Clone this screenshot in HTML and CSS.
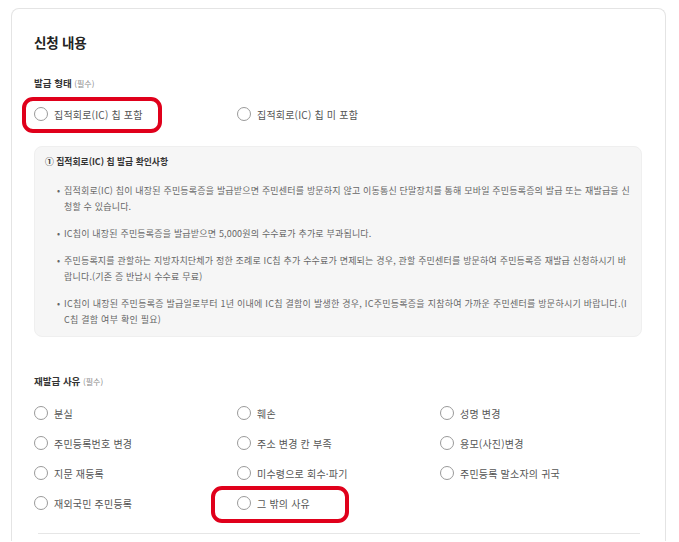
FILE: index.html
```html
<!DOCTYPE html>
<html lang="ko">
<head>
<meta charset="utf-8">
<title>신청 내용</title>
<link rel="stylesheet" href="styles.css">
</head>
<body>
<div class="card">
  <h2 class="title">신청 내용</h2>

  <div class="field-label">발급 형태 <span class="req">(필수)</span></div>
  <div class="options options-top">
    <label class="radio"><span class="circle"></span><span>집적회로(IC) 칩 포함</span><span class="mark mark-1"></span></label>
    <label class="radio"><span class="circle"></span><span>집적회로(IC) 칩 미 포함</span></label>
  </div>

  <div class="notice">
    <div class="notice-title">① 집적회로(IC) 칩 발급 확인사항</div>
    <ul class="notice-list">
      <li>집적회로(IC) 칩이 내장된 주민등록증을 발급받으면 주민센터를 방문하지 않고 이동통신 단말장치를 통해 모바일 주민등록증의 발급 또는 재발급을 신청할 수 있습니다.</li>
      <li>IC칩이 내장된 주민등록증을 발급받으면 5,000원의 수수료가 추가로 부과됩니다.</li>
      <li>주민등록지를 관할하는 지방자치단체가 정한 조례로 IC칩 추가 수수료가 면제되는 경우, 관할 주민센터를 방문하여 주민등록증 재발급 신청하시기 바랍니다.(기존 증 반납시 수수료 무료)</li>
      <li class="wide">IC칩이 내장된 주민등록증 발급일로부터 1년 이내에 IC칩 결함이 발생한 경우, IC주민등록증을 지참하여 가까운 주민센터를 방문하시기 바랍니다.(IC칩 결함 여부 확인 필요)</li>
    </ul>
  </div>

  <div class="field-label field-label-2">재발급 사유 <span class="req">(필수)</span></div>
  <div class="options options-grid">
    <label class="radio"><span class="circle"></span><span>분실</span></label>
    <label class="radio"><span class="circle"></span><span>훼손</span></label>
    <label class="radio"><span class="circle"></span><span>성명 변경</span></label>
    <label class="radio"><span class="circle"></span><span>주민등록번호 변경</span></label>
    <label class="radio"><span class="circle"></span><span>주소 변경 칸 부족</span></label>
    <label class="radio"><span class="circle"></span><span>용모(사진)변경</span></label>
    <label class="radio"><span class="circle"></span><span>지문 재등록</span></label>
    <label class="radio"><span class="circle"></span><span>미수령으로 회수·파기</span></label>
    <label class="radio"><span class="circle"></span><span>주민등록 말소자의 귀국</span></label>
    <label class="radio"><span class="circle"></span><span>재외국민 주민등록</span></label>
    <label class="radio"><span class="circle"></span><span>그 밖의 사유</span><span class="mark mark-2"></span></label>
  </div>

  <div class="divider"></div>
</div>
</body>
</html>
```

FILE: styles.css
```css
* { box-sizing: border-box; }

html, body {
  margin: 0;
  padding: 0;
  background: #ffffff;
}

body {
  font-family: "Noto Sans CJK KR", "Noto Sans", sans-serif;
  color: #333;
  padding: 8px 13px 0 11px;
  height: 542px;
  overflow: hidden;
}

.card {
  width: 655px;
  border: 1px solid #e4e4e4;
  border-bottom: none;
  border-radius: 8px 8px 0 0;
  padding: 24px 23px 7px 22px;
}

.title {
  margin: 0;
  font-size: 13.5px;
  line-height: 18px;
  font-weight: 700;
  color: #222;
  letter-spacing: -0.2px;
}

.field-label {
  margin-top: 25px;
  font-size: 9.5px;
  line-height: 14px;
  font-weight: 700;
  color: #333;
}

.field-label-2 {
  margin-top: 37px;
}

.req {
  font-weight: 400;
  font-size: 8px;
  color: #888;
}

.options {
  display: grid;
  grid-template-columns: 203px 203px 203px;
  row-gap: 14px;
}

.options-top {
  margin-top: 15px;
}

.options-grid {
  margin-top: 16px;
}

.radio {
  position: relative;
  display: flex;
  align-items: center;
  gap: 6px;
  height: 16px;
  font-size: 10px;
  color: #555;
  letter-spacing: 0.2px;
}

.circle {
  width: 14px;
  height: 14px;
  border: 1px solid #9a9a9a;
  border-radius: 50%;
  background: #fff;
  flex: none;
}

.mark {
  position: absolute;
  border: 4px solid #e0001b;
  border-radius: 11px;
  pointer-events: none;
}

.mark-1 {
  left: -12px;
  top: -9px;
  width: 140px;
  height: 36px;
}

.mark-2 {
  left: -26px;
  top: -9px;
  width: 138px;
  height: 37px;
}

.notice {
  margin-top: 24px;
  background: #f6f6f6;
  border: 1px solid #efefef;
  border-radius: 8px;
  padding: 7px 11px 8px 10px;
}

.notice-title {
  font-size: 8.8px;
  line-height: 16px;
  font-weight: 700;
  color: #333;
}

.notice-list {
  list-style: none;
  margin: 13px 0 0 0;
  padding: 0 0 0 19px;
  display: flex;
  flex-direction: column;
  gap: 11px;
}

.notice-list li {
  font-size: 9px;
  line-height: 16px;
  color: #666;
  letter-spacing: 0.18px;
  word-break: break-all;
  text-indent: -7px;
}

.notice-list li.wide {
  letter-spacing: 0.25px;
}

.notice-list li::before {
  content: "•";
  display: inline-block;
  width: 7px;
  text-indent: 0;
}

.divider {
  margin: 22px 2px 0 4px;
  border-top: 1px solid #e6e6e6;
}
```
